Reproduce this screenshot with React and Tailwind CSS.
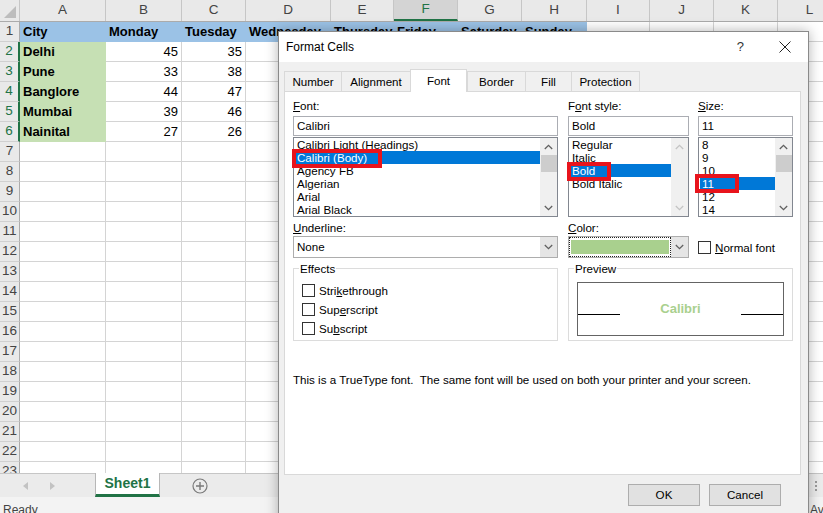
import React from "react";

const COLS = [
  { k: "A", w: "w-[86px]" },
  { k: "B", w: "w-[76px]" },
  { k: "C", w: "w-[64px]" },
  { k: "D", w: "w-[85px]" },
  { k: "E", w: "w-[63px]" },
  { k: "F", w: "w-[64px]" },
  { k: "G", w: "w-[64px]" },
  { k: "H", w: "w-[65px]" },
  { k: "I", w: "w-[63px]" },
  { k: "J", w: "w-[64px]" },
  { k: "K", w: "w-[64px]" },
  { k: "L", w: "w-[64px]" },
];

const DAYS = ["City", "Monday", "Tuesday", "Wednesday", "Thursday", "Friday", "Saturday", "Sunday"];
const DATA = [
  ["Delhi", 45, 35],
  ["Pune", 33, 38],
  ["Banglore", 44, 47],
  ["Mumbai", 39, 46],
  ["Nainital", 27, 26],
];

const ChevUp = ({ color = "#606060" }) => (
  <svg width="9" height="6" viewBox="0 0 9 6">
    <path d="M0.8 5L4.5 1.3L8.2 5" fill="none" stroke={color} strokeWidth="1.3" />
  </svg>
);

const ChevDown = ({ color = "#606060" }) => (
  <svg width="9" height="6" viewBox="0 0 9 6">
    <path d="M0.8 1L4.5 4.7L8.2 1" fill="none" stroke={color} strokeWidth="1.3" />
  </svg>
);

const Cell = ({ r, i, c }) => {
  const sel = r >= 2 && r <= 6;
  if (r === 1 && i < 8) {
    return (
      <div className={`${c.w} shrink-0 bg-[#9bc2e6] flex items-center pl-[3px] font-bold whitespace-nowrap overflow-hidden`}>
        {DAYS[i]}
      </div>
    );
  }
  if (sel && i === 0) {
    return (
      <div className={`${c.w} shrink-0 bg-[#c6e0b4] flex items-center pl-[3px] font-bold`}>
        {DATA[r - 2][0]}
      </div>
    );
  }
  if (sel && (i === 1 || i === 2)) {
    return (
      <div className={`${c.w} shrink-0 border-r border-b border-[#d4d4d4] flex items-center justify-end pr-[3px]`}>
        {DATA[r - 2][i]}
      </div>
    );
  }
  return <div className={`${c.w} shrink-0 border-r border-b border-[#d4d4d4]`} />;
};

const Sheet = () => {
  const rows = Array.from({ length: 23 }, (_, i) => i + 1);
  return (
    <div className="h-[473px] shrink-0 overflow-hidden text-[13px] text-black">
      <div className="flex h-[22px] w-[842px] bg-[#e9e9e9] border-b border-[#ababab]">
        <div className="w-[20px] shrink-0 border-r border-[#c6c6c6] flex items-end justify-end pr-[3px] pb-[3px]">
          <svg width="12" height="12" viewBox="0 0 12 12">
            <path d="M12 0L12 12L0 12Z" fill="#bdbdbd" />
          </svg>
        </div>
        {COLS.map((c) => (
          <div
            key={c.k}
            className={`${c.w} shrink-0 border-r border-[#c6c6c6] flex items-center justify-center text-[13.5px] ${
              c.k === "F" ? "bg-[#d4d4d4] border-b-2 border-b-[#217346] text-[#217346]" : "text-[#444]"
            }`}
          >
            {c.k}
          </div>
        ))}
      </div>
      {rows.map((r) => {
        const sel = r >= 2 && r <= 6;
        return (
          <div key={r} className="flex h-[20px] w-[842px]">
            <div
              className={`w-[20px] shrink-0 bg-[#e9e9e9] border-b border-b-[#d0d0d0] flex items-center justify-center text-[13.5px] ${
                sel ? "text-[#217346] border-r-2 border-r-[#217346]" : "text-[#444] border-r border-r-[#ababab]"
              }`}
            >
              {r}
            </div>
            {COLS.map((c, i) => (
              <Cell key={c.k} r={r} i={i} c={c} />
            ))}
          </div>
        );
      })}
    </div>
  );
};

const SheetTabs = () => (
  <div className="h-[24px] shrink-0 flex bg-[#ebebeb] border-t border-[#c6c6c6]">
    <div className="w-[95px] shrink-0 flex items-center pl-[23px] gap-[22px]">
      <svg width="5" height="8" viewBox="0 0 5 8">
        <path d="M5 0L0 4L5 8Z" fill="#c2c2c2" />
      </svg>
      <svg width="5" height="8" viewBox="0 0 5 8">
        <path d="M0 0L5 4L0 8Z" fill="#c2c2c2" />
      </svg>
    </div>
    <div className="w-[65px] shrink-0 -mt-px bg-white border-x border-[#b7b7b7] border-b-[3px] border-b-[#217346] flex items-center justify-center font-bold text-[14px] text-[#217346]">
      Sheet1
    </div>
    <div className="ml-[32px] flex items-center">
      <svg width="16" height="16" viewBox="0 0 16 16">
        <circle cx="8" cy="8" r="7" fill="none" stroke="#7a7a7a" strokeWidth="1.2" />
        <path d="M8 4V12M4 8H12" stroke="#7a7a7a" strokeWidth="1.4" />
      </svg>
    </div>
    <div className="flex-1" />
    <div className="w-[15px] flex flex-col items-center justify-center gap-[2px] border-l border-[#c6c6c6]">
      <span className="w-[2px] h-[2px] bg-[#9a9a9a]" />
      <span className="w-[2px] h-[2px] bg-[#9a9a9a]" />
      <span className="w-[2px] h-[2px] bg-[#9a9a9a]" />
    </div>
  </div>
);

const StatusBar = () => (
  <div className="h-[16px] shrink-0 flex bg-[#f3f3f3] text-[12px] text-[#444] overflow-hidden">
    <span className="w-[810px] shrink-0 pl-[3px] pt-[5px] leading-[16px]">Ready</span>
    <span className="shrink-0 pt-[5px] leading-[16px] whitespace-nowrap">Average: 37.8</span>
  </div>
);

const ScrollBar = ({ thumb, disabled }) => (
  <div className="w-[17px] shrink-0 bg-[#f0f0f0] flex flex-col">
    <div className="h-[17px] flex items-center justify-center">
      <ChevUp color={disabled ? "#c4c4c4" : "#606060"} />
    </div>
    {thumb && <div className="h-[17px] ml-px bg-[#cdcdcd]" />}
    <div className="flex-1" />
    <div className="h-[17px] flex items-center justify-center">
      <ChevDown color={disabled ? "#c4c4c4" : "#606060"} />
    </div>
  </div>
);

const ListBox = ({ items, sel, thumb, disabled, children }) => (
  <div className="relative mt-px h-[80px] border border-[#828790] bg-white flex">
    <div className="flex-1 pl-px overflow-hidden">
      {items.map((t, i) => (
        <div
          key={t}
          className={`h-[13px] leading-[13px] pl-[2px] whitespace-nowrap ${i === sel ? "bg-[#0078d7] text-white" : ""}`}
        >
          {t}
        </div>
      ))}
    </div>
    <ScrollBar thumb={thumb} disabled={disabled} />
    {children}
  </div>
);

const Label = ({ children }) => <div className="h-[16px] leading-[16px] whitespace-nowrap">{children}</div>;

const Checkbox = () => <span className="w-[13px] h-[13px] shrink-0 border border-[#333] bg-white" />;

const Check = ({ children }) => (
  <div className="h-[19px] flex items-center">
    <Checkbox />
    <span className="ml-[4px]">{children}</span>
  </div>
);

const Dialog = () => {
  const tabs = [
    { t: "Number", w: "w-[58px]" },
    { t: "Alignment", w: "w-[70px]" },
    { t: "Font", w: "w-[57px]", on: true },
    { t: "Border", w: "w-[59px]" },
    { t: "Fill", w: "w-[47px]" },
    { t: "Protection", w: "w-[69px]" },
  ];
  return (
    <div className="absolute left-[278px] top-[31px] w-[531px] h-[500px] border border-[#8a8a8a] bg-[#f0f0f0] shadow-[0_0_12px_rgba(0,0,0,0.3)] flex flex-col text-[11.6px] text-black">
      <div className="h-[30px] shrink-0 bg-white flex items-center pl-[7px] pr-[17px]">
        <span className="flex-1 text-[12px]">Format Cells</span>
        <span className="text-[13px] text-[#333]">?</span>
        <svg className="ml-[35px]" width="12" height="12" viewBox="0 0 12 12">
          <path d="M0.5 0.5L11.5 11.5M11.5 0.5L0.5 11.5" stroke="#222" strokeWidth="1" />
        </svg>
      </div>
      <div className="pt-[7px] pl-[5px] pr-[7px]">
        <div className="flex items-end h-[22px]">
          {tabs.map((tb) =>
            tb.on ? (
              <div
                key={tb.t}
                className={`${tb.w} h-[23px] -mb-px relative z-10 bg-white border-x border-t border-[#d9d9d9] flex items-center justify-center`}
              >
                {tb.t}
              </div>
            ) : (
              <div
                key={tb.t}
                className={`${tb.w} h-[20px] border-l border-t border-r border-[#d9d9d9] -mr-px flex items-center justify-center`}
              >
                {tb.t}
              </div>
            )
          )}
        </div>
        <div className="h-[384px] w-[517px] bg-white border border-[#d9d9d9] pl-[8px] pt-[6px]">
          <div className="flex">
            <div className="w-[265px] shrink-0">
              <Label>
                <span className="underline">F</span>ont:
              </Label>
              <div className="mt-[2px] h-[20px] border border-[#abadb3] pl-[3px] leading-[18px]">Calibri</div>
              <ListBox
                items={["Calibri Light (Headings)", "Calibri (Body)", "Agency FB", "Algerian", "Arial", "Arial Black"]}
                sel={1}
                thumb
              >
                <div className="absolute left-[-2px] top-[11px] w-[90px] h-[19px] border-[4px] border-[#e8141c]" />
              </ListBox>
            </div>
            <div className="w-[121px] shrink-0 ml-[10px]">
              <Label>
                F<span className="underline">o</span>nt style:
              </Label>
              <div className="mt-[2px] h-[20px] border border-[#abadb3] pl-[3px] leading-[18px]">Bold</div>
              <ListBox items={["Regular", "Italic", "Bold", "Bold Italic"]} sel={2} disabled>
                <div className="absolute left-[-2px] top-[24px] w-[44px] h-[19px] border-[4px] border-[#e8141c]" />
              </ListBox>
            </div>
            <div className="w-[95px] shrink-0 ml-[9px]">
              <Label>
                <span className="underline">S</span>ize:
              </Label>
              <div className="mt-[2px] h-[20px] border border-[#abadb3] pl-[3px] leading-[18px]">11</div>
              <ListBox items={["8", "9", "10", "11", "12", "14"]} sel={3} thumb>
                <div className="absolute left-[-4px] top-[36px] w-[44px] h-[19px] border-[4px] border-[#e8141c]" />
              </ListBox>
            </div>
          </div>

          <div className="flex mt-[3px]">
            <div className="w-[265px] shrink-0">
              <Label>
                <span className="underline">U</span>nderline:
              </Label>
              <div className="h-[22px] border border-[#adadad] flex">
                <span className="flex-1 pl-[3px] leading-[20px]">None</span>
                <span className="w-[17px] bg-[#e5e5e5] flex items-center justify-center">
                  <ChevDown />
                </span>
              </div>
            </div>
            <div className="w-[121px] shrink-0 ml-[10px]">
              <Label>
                <span className="underline">C</span>olor:
              </Label>
              <div className="h-[22px] border border-[#adadad] flex">
                <span className="flex-1 border border-dotted border-[#222] px-px py-[2px]">
                  <span className="block h-full bg-[#a9d08e]" />
                </span>
                <span className="w-[17px] bg-[#e5e5e5] flex items-center justify-center">
                  <ChevDown />
                </span>
              </div>
            </div>
            <div className="w-[95px] shrink-0 ml-[9px] pt-[17px]">
              <div className="h-[21px] flex items-center">
                <Checkbox />
                <span className="ml-[4px]">
                  <span className="underline">N</span>ormal font
                </span>
              </div>
            </div>
          </div>

          <div className="flex mt-[10px]">
            <div className="relative w-[265px] h-[73px] shrink-0 border border-[#dcdcdc] pl-[8px] pt-[12px]">
              <span className="absolute top-[-8px] left-[5px] bg-white px-px leading-[16px]">Effects</span>
              <Check>
                Stri<span className="underline">k</span>ethrough
              </Check>
              <Check>
                Sup<span className="underline">e</span>rscript
              </Check>
              <Check>
                Su<span className="underline">b</span>script
              </Check>
            </div>
            <div className="relative w-[225px] h-[73px] shrink-0 ml-[10px] border border-[#dcdcdc] pl-[8px] pt-[13px]">
              <span className="absolute top-[-8px] left-[5px] bg-white px-px leading-[16px]">Preview</span>
              <div className="w-[207px] h-[54px] border border-[#646464] flex items-center">
                <span className="w-[42px] h-px bg-black mt-[10px]" />
                <span className="flex-1 text-center font-bold text-[13px] text-[#a9d08e]">Calibri</span>
                <span className="w-[42px] h-px bg-black mt-[10px]" />
              </div>
            </div>
          </div>

          <div className="mt-[31px] leading-[16px] whitespace-nowrap">
            This is a TrueType font.&nbsp; The same font will be used on both your printer and your screen.
          </div>
        </div>
        <div className="flex justify-end gap-[9px] pr-[20px] mt-[9px]">
          <button className="w-[72px] h-[22px] bg-[#e1e1e1] border border-[#adadad]">OK</button>
          <button className="w-[72px] h-[22px] bg-[#e1e1e1] border border-[#adadad]">Cancel</button>
        </div>
      </div>
    </div>
  );
};

export default function App() {
  return (
    <div className="relative w-[823px] h-[513px] overflow-hidden bg-white font-['Liberation_Sans',Arial,sans-serif]">
      <div className="flex flex-col h-full">
        <Sheet />
        <SheetTabs />
        <StatusBar />
      </div>
      <Dialog />
    </div>
  );
}
